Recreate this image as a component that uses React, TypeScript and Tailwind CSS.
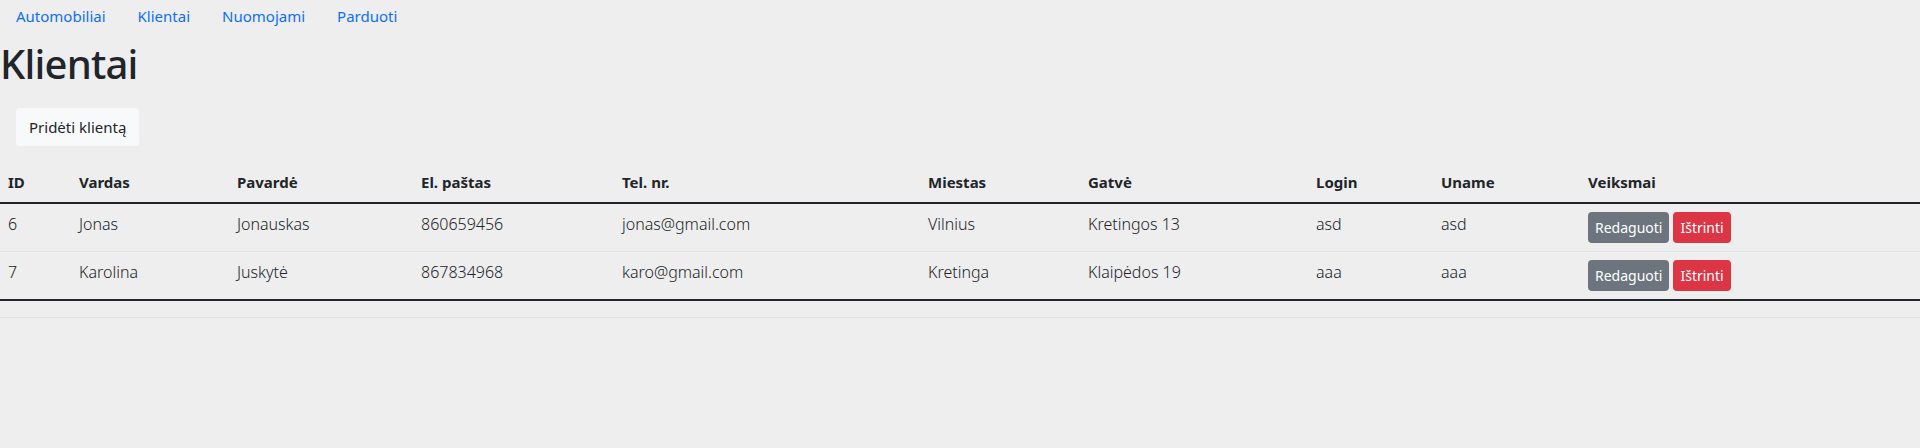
import React from "react";

const rows = [
  { id: "6", vardas: "Jonas", pavarde: "Jonauskas", el: "860659456", tel: "jonas@gmail.com", miestas: "Vilnius", gatve: "Kretingos 13", login: "asd", uname: "asd" },
  { id: "7", vardas: "Karolina", pavarde: "Juskytė", el: "867834968", tel: "karo@gmail.com", miestas: "Kretinga", gatve: "Klaipėdos 19", login: "aaa", uname: "aaa" },
];

const headers = ["ID", "Vardas", "Pavardė", "El. paštas", "Tel. nr.", "Miestas", "Gatvė", "Login", "Uname", "Veiksmai"];
const widths = ["w-[71px]", "w-[158px]", "w-[184px]", "w-[201px]", "w-[306px]", "w-[160px]", "w-[228px]", "w-[125px]", "w-[147px]", "w-auto"];

export default function App() {
  return (
    <div className="min-h-[448px] bg-[#eeeeee] text-[#212529] [font-family:'Noto_Sans',sans-serif] text-[16px] leading-[24px]">
      <ul className="flex">
        {["Automobiliai", "Klientai", "Nuomojami", "Parduoti"].map((l) => (
          <li key={l}>
            <a href="#" className="block px-4 pt-[4px] pb-[8px] text-[#0d6efd] text-[15px]">
              {l}
            </a>
          </li>
        ))}
      </ul>
      <h1 className="text-[40px] leading-[48px] font-medium mt-[4px] mb-2 tracking-[-0.8px]">Klientai</h1>
      <div className="pl-4 pt-[12px] pb-4">
        <button className="bg-[#f8f9fa] rounded-[4px] h-[38px] px-[13px] text-[15px]">Pridėti klientą</button>
      </div>
      <table className="w-full table-fixed border-collapse text-[16px] text-left">
        <colgroup>
          {widths.map((w, i) => (
            <col key={i} className={w} />
          ))}
        </colgroup>
        <thead>
          <tr>
            {headers.map((h) => (
              <th key={h} className="px-2 py-2 font-bold text-[15px] border-b border-[#dee2e6] align-bottom">
                {h}
              </th>
            ))}
          </tr>
        </thead>
        <tbody className="border-t-[2px] border-[#212529]">
          {rows.map((r) => (
            <tr key={r.id}>
              {[r.id, r.vardas, r.pavarde, r.el, r.tel, r.miestas, r.gatve, r.login, r.uname].map((c, i) => (
                <td key={i} className="px-2 py-2 border-b border-[#dee2e6] align-top font-light">
                  {c}
                </td>
              ))}
              <td className="px-2 py-2 border-b border-[#dee2e6] align-top">
                <div className="flex gap-[4px]">
                  <button className="bg-[#6c757d] text-white rounded-[4px] h-[31px] px-[7px] text-[14px]">Redaguoti</button>
                  <button className="bg-[#dc3545] text-white rounded-[4px] h-[31px] px-[7px] text-[14px]">Ištrinti</button>
                </div>
              </td>
            </tr>
          ))}
        </tbody>
        <tfoot className="border-t-[2px] border-[#212529]">
          <tr>
            <td colSpan={10} className="h-[17px] p-0 border-b border-[#dee2e6]"></td>
          </tr>
        </tfoot>
      </table>
    </div>
  );
}
